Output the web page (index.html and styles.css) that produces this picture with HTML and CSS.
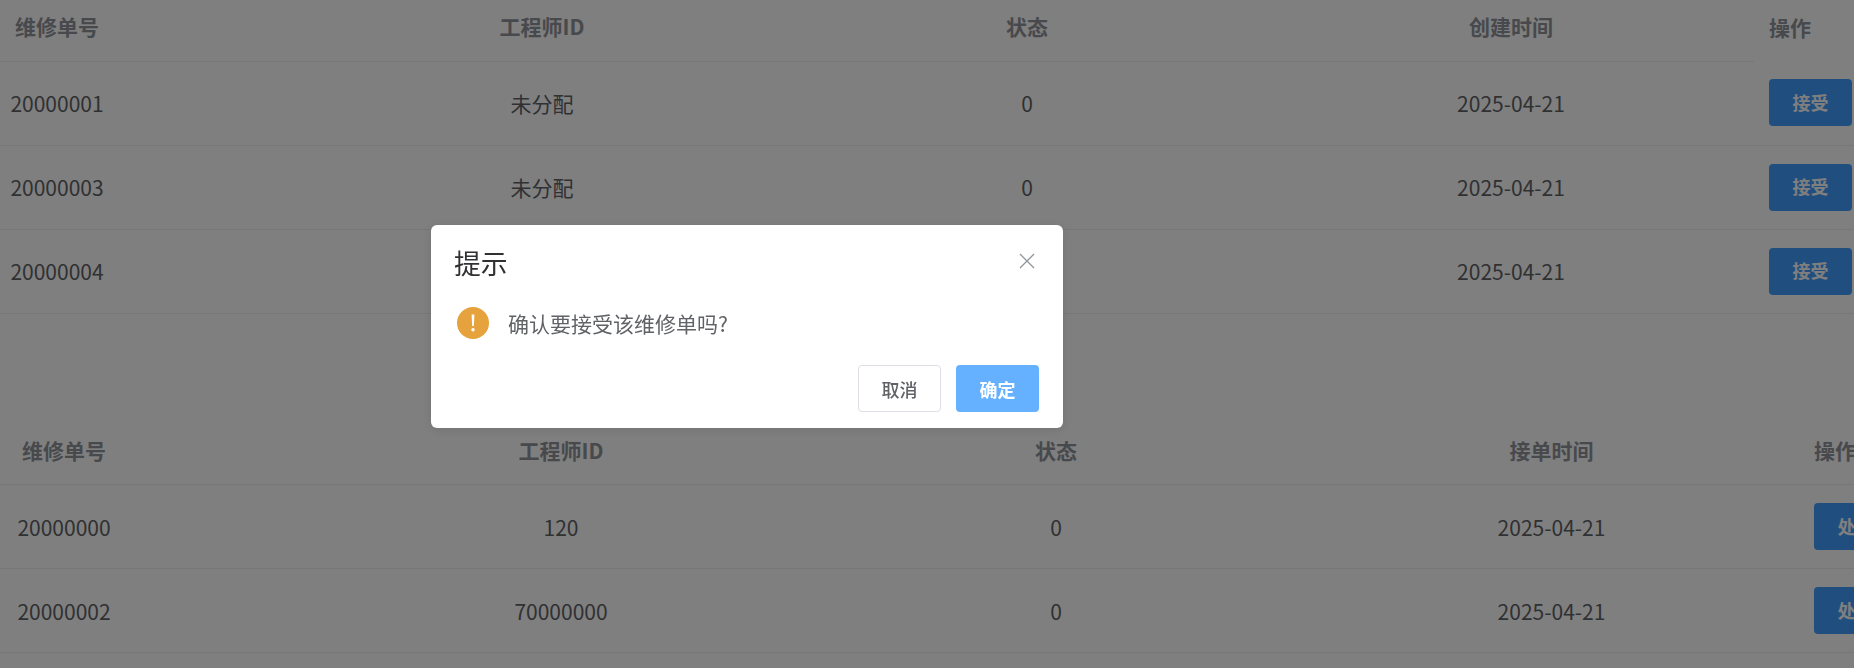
FILE: index.html
```html
<!DOCTYPE html>
<html lang="zh-CN">
<head>
  <meta charset="UTF-8" />
  <title>维修单管理</title>
  <link rel="stylesheet" href="styles.css">
</head>
<body>
  <!-- 待接受的维修单 -->
  <table class="order-table pending-table">
    <colgroup>
      <col class="col-a"><col class="col-b"><col class="col-c"><col class="col-d"><col class="col-e">
    </colgroup>
    <thead>
      <tr>
        <th class="order-no"><span>维修单号</span></th>
        <th>工程师ID</th>
        <th>状态</th>
        <th>创建时间</th>
        <th class="op">操作</th>
      </tr>
    </thead>
    <tbody>
      <tr>
        <td class="order-no"><span>20000001</span></td>
        <td>未分配</td>
        <td>0</td>
        <td>2025-04-21</td>
        <td class="op"><button class="btn-primary">接受</button></td>
      </tr>
      <tr>
        <td class="order-no"><span>20000003</span></td>
        <td>未分配</td>
        <td>0</td>
        <td>2025-04-21</td>
        <td class="op"><button class="btn-primary">接受</button></td>
      </tr>
      <tr>
        <td class="order-no"><span>20000004</span></td>
        <td>未分配</td>
        <td>0</td>
        <td>2025-04-21</td>
        <td class="op"><button class="btn-primary">接受</button></td>
      </tr>
    </tbody>
  </table>

  <!-- 已接受的维修单 -->
  <table class="order-table accepted-table">
    <colgroup>
      <col class="col-a"><col class="col-b"><col class="col-c"><col class="col-d"><col class="col-e">
    </colgroup>
    <thead>
      <tr>
        <th class="order-no"><span>维修单号</span></th>
        <th>工程师ID</th>
        <th>状态</th>
        <th>接单时间</th>
        <th class="op">操作</th>
      </tr>
    </thead>
    <tbody>
      <tr>
        <td class="order-no"><span>20000000</span></td>
        <td>120</td>
        <td>0</td>
        <td>2025-04-21</td>
        <td class="op"><button class="btn-primary">处理</button></td>
      </tr>
      <tr>
        <td class="order-no"><span>20000002</span></td>
        <td>70000000</td>
        <td>0</td>
        <td>2025-04-21</td>
        <td class="op"><button class="btn-primary">处理</button></td>
      </tr>
    </tbody>
  </table>

  <!-- 确认弹窗 -->
  <div class="overlay">
    <div class="dialog">
      <div class="dialog-header">
        <span class="dialog-title">提示</span>
        <svg class="dialog-close" viewBox="0 0 16 16" width="16" height="16">
          <path d="M1 1L15 15M15 1L1 15" stroke="#909399" stroke-width="1.3" fill="none" />
        </svg>
      </div>
      <div class="dialog-body">
        <svg class="warn-icon" viewBox="0 0 32 32" width="32" height="32">
          <circle cx="16" cy="16" r="16" fill="#e6a23c" />
          <path d="M14.6 7.5h2.8l-.5 11.5h-1.8z" fill="#fff" />
          <circle cx="16" cy="22.8" r="1.7" fill="#fff" />
        </svg>
        <span>确认要接受该维修单吗?</span>
      </div>
      <div class="dialog-footer">
        <button class="btn-plain">取消</button>
        <button class="btn-confirm">确定</button>
      </div>
    </div>
  </div>
</body>
</html>
```

FILE: styles.css
```css
body {
  margin: 0;
  height: 668px;
  overflow: hidden;
  background: #fff;
  font-family: "Noto Sans CJK SC", "Noto Sans", sans-serif;
  font-size: 21px;
  color: #606266;
}

button {
  font-family: inherit;
  cursor: pointer;
}

/* tables */
.order-table {
  border-collapse: collapse;
  table-layout: fixed;
}

.pending-table {
  width: 1854px;
}

.pending-table .col-a { width: 298px; }
.pending-table .col-b { width: 488px; }
.pending-table .col-c { width: 482px; }
.pending-table .col-d { width: 486px; }
.pending-table .col-e { width: 100px; }

.accepted-table {
  width: 1899px;
  margin-top: 110px;
}

.accepted-table .col-a { width: 314px; }
.accepted-table .col-b { width: 494px; }
.accepted-table .col-c { width: 496px; }
.accepted-table .col-d { width: 495px; }
.accepted-table .col-e { width: 100px; }

.order-table th {
  height: 61px;
  padding: 0 0 8px;
  box-sizing: border-box;
  font-weight: 700;
  color: #909399;
  text-align: center;
  border-bottom: 1px solid #ebeef5;
}

.order-table td {
  height: 84px;
  padding: 0;
  box-sizing: border-box;
  text-align: center;
  border-bottom: 1px solid #ebeef5;
}

.order-table .order-no {
  padding-right: 184px;
}

.accepted-table .order-no {
  padding-right: 186px;
}

.order-table .op {
  padding-left: 15px;
  text-align: left;
}

.pending-table th.op {
  border-bottom: none;
}

.btn-primary {
  width: 83px;
  height: 47px;
  padding: 0 0 2px;
  border: none;
  border-radius: 4px;
  background: #409eff;
  color: #fff;
  font-size: 18px;
  font-weight: 700;
  vertical-align: middle;
}

/* dialog */
.overlay {
  position: fixed;
  top: 0;
  left: 0;
  width: 100%;
  height: 100%;
  background: rgba(0, 0, 0, 0.5);
}

.dialog {
  position: absolute;
  left: 431px;
  top: 225px;
  width: 632px;
  height: 203px;
  box-sizing: border-box;
  padding: 18px 24px 16px 23px;
  display: flex;
  flex-direction: column;
  background: #fff;
  border-radius: 6px;
  box-shadow: 0 2px 12px rgba(0, 0, 0, 0.1);
}

.dialog-header {
  display: flex;
  justify-content: space-between;
  align-items: center;
  height: 38px;
}

.dialog-title {
  font-size: 26.8px;
  color: #303133;
}

.dialog-close {
  margin-top: -2px;
  margin-right: 4px;
}

.dialog-body {
  display: flex;
  align-items: center;
  gap: 19px;
  margin-top: 26px;
  padding-left: 3px;
}

.dialog-footer {
  display: flex;
  justify-content: flex-end;
  gap: 15px;
  margin-top: auto;
}

.btn-plain,
.btn-confirm {
  width: 83px;
  height: 47px;
  padding: 0;
  border-radius: 4px;
  font-size: 18px;
  font-weight: 700;
}

.btn-plain {
  border: 1px solid #dcdfe6;
  background: #fff;
  color: #606266;
  font-weight: 500;
}

.btn-confirm {
  border: none;
  background: #66b1ff;
  color: #fff;
}
```
